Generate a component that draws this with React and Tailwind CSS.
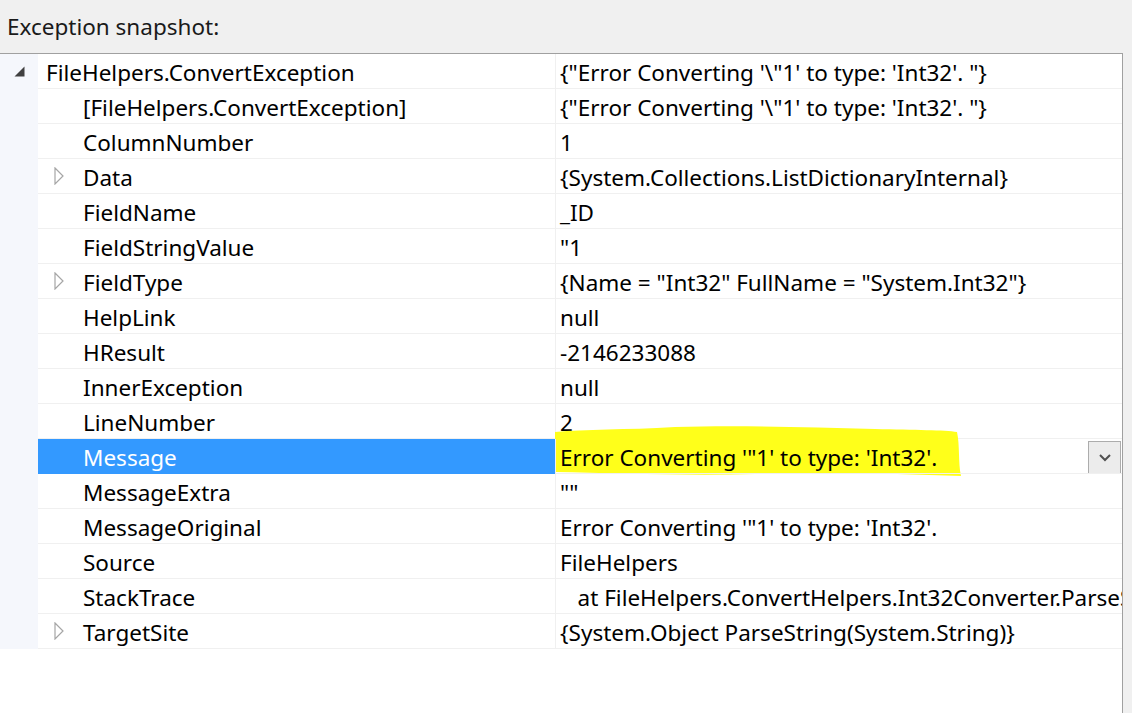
import React from 'react';

const rows = [
  { name: 'FileHelpers.ConvertException', value: '{"Error Converting \'\\"1\' to type: \'Int32\'. "}', level: 0, expander: 'open' },
  { name: '[FileHelpers.ConvertException]', value: '{"Error Converting \'\\"1\' to type: \'Int32\'. "}', level: 1 },
  { name: 'ColumnNumber', value: '1', level: 1 },
  { name: 'Data', value: '{System.Collections.ListDictionaryInternal}', level: 1, expander: 'closed' },
  { name: 'FieldName', value: '_ID', level: 1 },
  { name: 'FieldStringValue', value: '"1', level: 1 },
  { name: 'FieldType', value: '{Name = "Int32" FullName = "System.Int32"}', level: 1, expander: 'closed' },
  { name: 'HelpLink', value: 'null', level: 1 },
  { name: 'HResult', value: '-2146233088', level: 1 },
  { name: 'InnerException', value: 'null', level: 1 },
  { name: 'LineNumber', value: '2', level: 1 },
  { name: 'Message', value: 'Error Converting \'"1\' to type: \'Int32\'.', level: 1, selected: true },
  { name: 'MessageExtra', value: '""', level: 1 },
  { name: 'MessageOriginal', value: 'Error Converting \'"1\' to type: \'Int32\'.', level: 1 },
  { name: 'Source', value: 'FileHelpers', level: 1 },
  { name: 'StackTrace', value: '   at FileHelpers.ConvertHelpers.Int32Converter.ParseString(String from)', level: 1 },
  { name: 'TargetSite', value: '{System.Object ParseString(System.String)}', level: 1, expander: 'closed' },
];

function OpenArrow() {
  return (
    <svg width="11" height="11" viewBox="0 0 11 11" className="block">
      <polygon points="10.5,0.5 10.5,10.5 0.5,10.5" fill="#404040" />
    </svg>
  );
}

function ClosedArrow() {
  return (
    <svg width="10" height="18" viewBox="0 0 10 18" className="block">
      <polygon points="1,1 9,9 1,17" fill="none" stroke="#a6a6a6" strokeWidth="1.2" />
    </svg>
  );
}

// yellow marker stroke drawn over the Message value
function Highlight() {
  return (
    <svg
      width="410"
      height="52"
      viewBox="0 0 410 52"
      className="absolute left-[555px] top-[-13px] pointer-events-none"
    >
      <path
        d="M0,6 C30,3 70,4 120,1 C180,-1 250,1 320,3 C360,4 390,4 402,6 C405,20 403,36 406,50 C340,47 270,47 200,48 C130,50 60,47 0,46 Z"
        fill="#ffff1a"
      />
    </svg>
  );
}

export default function App() {
  return (
    <div
      className="w-[1132px] h-[713px] bg-[#f0f0f0] flex flex-col overflow-hidden text-[22.5px] text-black"
      style={{ fontFamily: '"Segoe UI", "Noto Sans", "Open Sans", sans-serif' }}
    >
      <div className="h-[53px] shrink-0 flex items-center pl-[7px] text-[#1a1a1a]">Exception snapshot:</div>
      <div className="flex-1 w-[1123px] bg-white border-t border-r border-[#a0a0a0]">
        {rows.map((r, i) => (
          <div key={i} className="flex h-[35px] relative">
            <div className="w-[38px] shrink-0 bg-[#f5f7fc] flex items-center justify-end pr-[13px]">
              {r.expander === 'open' && <OpenArrow />}
            </div>
            <div
              className={
                'w-[517px] shrink-0 flex items-center pt-[4px] border-b whitespace-nowrap overflow-hidden ' +
                (r.selected ? 'bg-[#3399ff] text-white border-[#3399ff]' : 'border-[#f0f0f0]')
              }
            >
              {r.level === 0 ? (
                <span className="pl-[8px]">{r.name}</span>
              ) : (
                <>
                  <span className="w-[45px] shrink-0 flex items-center pl-[16px] -mt-[4px]">
                    {r.expander === 'closed' && <ClosedArrow />}
                  </span>
                  <span>{r.name}</span>
                </>
              )}
            </div>
            {r.selected && <Highlight />}
            <div className="flex-1 min-w-0 flex items-center pt-[4px] border-b border-l border-[#f0f0f0] pl-[4px] relative overflow-hidden">
              <span className="whitespace-pre">{r.value}</span>
              {r.selected && (
                <div className="absolute right-[1px] top-[2px] w-[33px] h-[33px] bg-[#ececec] border border-[#acacac] flex items-center justify-center">
                  <svg width="12" height="8" viewBox="0 0 12 8">
                    <path d="M1,1 L6,6 L11,1" fill="none" stroke="#505050" strokeWidth="2" />
                  </svg>
                </div>
              )}
            </div>
          </div>
        ))}
      </div>
    </div>
  );
}
